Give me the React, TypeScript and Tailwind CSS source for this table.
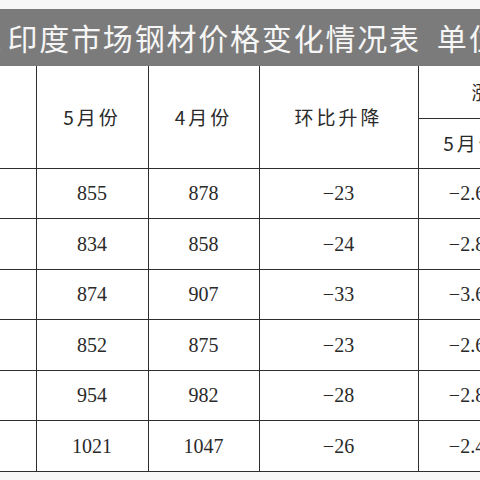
const rows = [
  ["855", "878", "−23", "−2.62"],
  ["834", "858", "−24", "−2.80"],
  ["874", "907", "−33", "−3.64"],
  ["852", "875", "−23", "−2.63"],
  ["954", "982", "−28", "−2.85"],
  ["1021", "1047", "−26", "−2.48"],
];

const cell = "border-[1.5px] border-[#2e2e2e] text-center align-middle";
const cjk = { fontFamily: '"Noto Sans CJK SC", "Noto Sans", sans-serif' };
const serif = { fontFamily: '"Liberation Serif", "Times New Roman", serif' };

export default function App() {
  return (
    <div className="w-[480px] h-[480px] overflow-hidden bg-[#f7f7f7]">
      <div className="h-[9px]" />
      {/* title bar */}
      <div
        className="h-[57px] bg-[#7b7b7b] flex items-center whitespace-nowrap text-[#f6f6f6] text-[30px] tracking-[1.8px]"
        style={cjk}
      >
        <span className="ml-[-15px] mr-[4px]">1</span>
        <span>印度市场钢材价格变化情况表</span>
        <span className="ml-[16px]">单位</span>
      </div>

      <table className="table-fixed border-collapse bg-white text-[#2a2a2a]" style={{ width: 640 }}>
        <colgroup>
          <col style={{ width: 36 }} />
          <col style={{ width: 112 }} />
          <col style={{ width: 111 }} />
          <col style={{ width: 159 }} />
          <col style={{ width: 108 }} />
          <col style={{ width: 114 }} />
        </colgroup>
        <thead style={cjk} className="text-[19px] font-normal tracking-[3px]">
          <tr className="h-[52px]">
            <th rowSpan={2} className={cell + " border-l-0 border-t-0"} />
            <th rowSpan={2} className={cell + " border-t-0 font-normal"}>5月份</th>
            <th rowSpan={2} className={cell + " border-t-0 font-normal"}>4月份</th>
            <th rowSpan={2} className={cell + " border-t-0 font-normal"}>环比升降</th>
            <th colSpan={2} className={cell + " border-t-0 font-normal p-0"}>
              <div className="flex whitespace-nowrap pl-[53px]">涨跌幅（%）</div>
            </th>
          </tr>
          <tr className="h-[50px]">
            <th className={cell + " font-normal"}>5月份</th>
            <th className={cell + " font-normal"}>4月份</th>
          </tr>
        </thead>
        <tbody style={serif} className="text-[20px]">
          {rows.map((r, i) => (
            <tr key={i} className="h-[50.5px]">
              <td className={cell + " border-l-0"} />
              {r.map((v, j) => (
                <td key={j} className={cell}>
                  {v}
                </td>
              ))}
              <td className={cell}>−2.50</td>
            </tr>
          ))}
        </tbody>
      </table>
    </div>
  );
}
